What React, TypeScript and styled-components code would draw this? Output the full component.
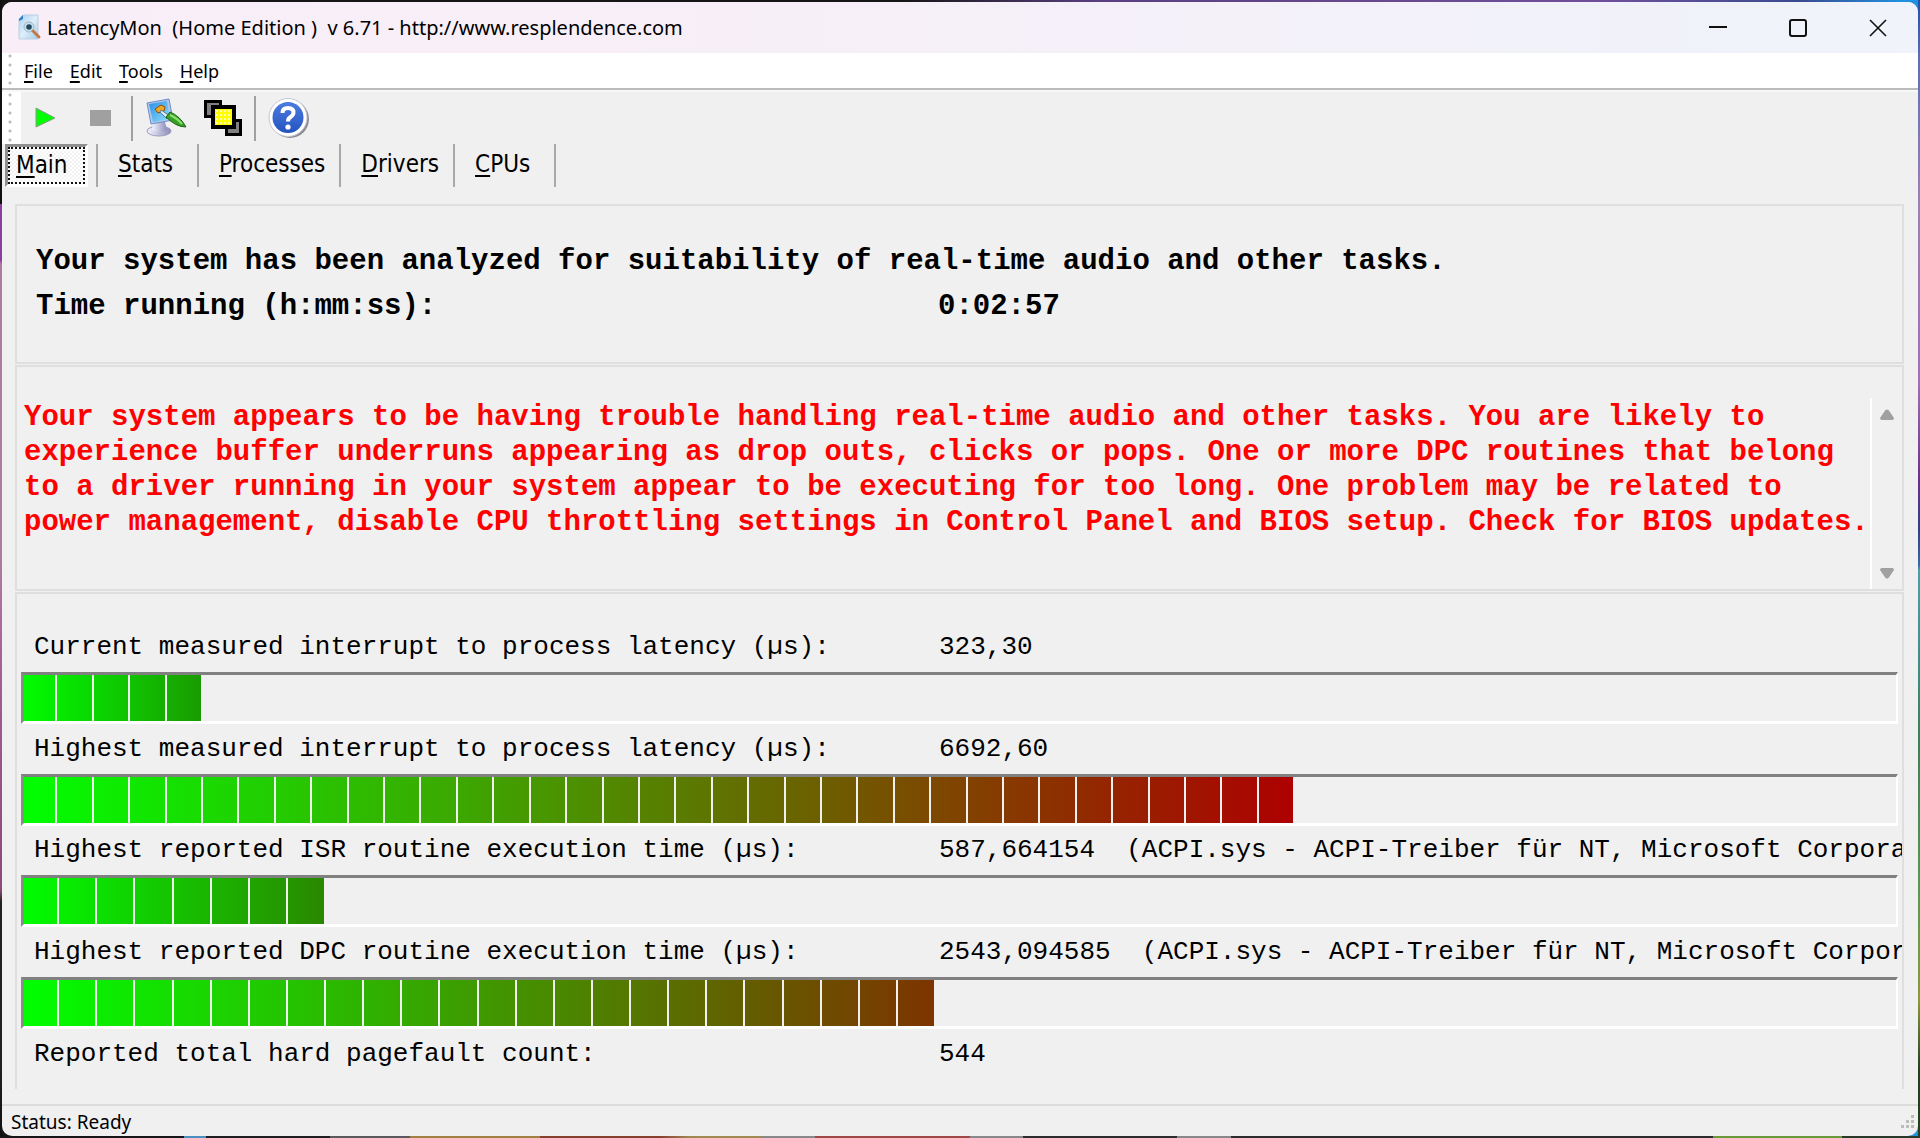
import React from "react";
import styled, { createGlobalStyle } from "styled-components";

const UI_FONT = `"Noto Sans", "Open Sans", sans-serif`;
const TAB_FONT = `"DejaVu Sans Condensed", "Noto Sans", sans-serif`;
const MONO_FONT = `"Liberation Mono", "Courier New", monospace`;

const GlobalStyle = createGlobalStyle`
  *, *::before, *::after { box-sizing: border-box; }
  html, body, #root { height: 100%; }
  body { margin: 0; color: #000; font-family: ${UI_FONT}; }
  button, textarea { font: inherit; color: inherit; border: 0; margin: 0; padding: 0; background: none; }
`;

const Desktop = styled.div`
  height: 100%;
  padding: 2px;
  background:
    linear-gradient(90deg, #16161a 0 184px, #4a90c0 184px 206px, #1e1e22 206px 330px, #5a5a5e 330px 410px, #a08040 410px 540px, #8a4030 540px 660px, #a08850 690px 761px, #888 761px 815px, #a04848 815px 970px, #888 970px 1023px, #2c2c30 1023px 1177px, #888 1177px 1231px, #2c2c30 1231px 1713px, #6a9a3a 1713px 1842px, #2c3828 1842px) bottom / 100% 2px no-repeat,
    linear-gradient(180deg, #101010 0 204px, #8a3fa0 204px 260px, #b07aa0 264px 560px, #a05a90 700px, #8a4a78 890px, #202020 902px 1070px, #101010) left / 2px 100% no-repeat,
    linear-gradient(180deg, #1a4fb0 0, #5a70b8 60px, #9a80b8 200px, #a070b8 380px, #6a2f90 480px, #30408a 530px, #306aa8 565px, #4aa0a8 570px, #3a9088 660px, #3a8058 740px, #5a9a50 900px, #8a9a3a 1000px, #204020 1070px) right / 2px 100% no-repeat,
    linear-gradient(90deg, #151515 0 900px, #5a4080 1100px, #70509a 1600px, #3a4a90 1800px, #2090e0 1900px);
`;

const Window = styled.main`
  height: 100%;
  display: flex;
  flex-direction: column;
  overflow: hidden;
  border-radius: 10px;
  background: #f0f0f0;
`;

const TitleBar = styled.header`
  height: 51px;
  flex: none;
  display: flex;
  align-items: center;
  padding-left: 15px;
  background: linear-gradient(90deg, #f9eef7 0, #f7eff8 40%, #f1f2f9 85%, #f0f3f9);
`;

const Title = styled.h1`
  flex: 1;
  margin: 0 0 0 5px;
  font-size: 20px;
  line-height: 28px;
  font-weight: 400;
  white-space: pre;
`;

const CaptionButton = styled.button`
  width: 80px;
  height: 100%;
  display: grid;
  place-items: center;
`;

const Gripper = styled.div`
  width: 19px;
  flex: none;
  align-self: stretch;
  background:
    radial-gradient(circle at 2px 2px, #bdbdbd 0 1px, transparent 2px) 6px 1px / 4px 9px repeat-y,
    #fff;
`;

const MenuBar = styled.nav`
  height: 37px;
  flex: none;
  display: flex;
  align-items: center;
  background: #fff;
  border-bottom: 2px solid #bcbcbc;
`;

const MenuButton = styled.button`
  font-size: 18px;
  line-height: 24px;
  padding: 0 8px 0 9px;
  &:first-of-type { padding-left: 3px; }
`;

const Key = styled.span`
  text-decoration: underline;
  text-decoration-thickness: 2px;
  text-underline-offset: 3px;
  text-decoration-skip-ink: none;
`;

const ToolBar = styled.div`
  height: 54px;
  flex: none;
  display: flex;
  align-items: center;
  border-top: 2px solid #f8f8fa;
`;

const ToolGroup = styled.div`
  display: flex;
  align-items: center;
  gap: 5px;
`;

const ToolButton = styled.button<{ $small?: boolean }>`
  width: ${(p) => (p.$small ? 50 : 52)}px;
  height: 46px;
  display: grid;
  place-items: center;
`;

const ToolRule = styled.span`
  width: 2px;
  height: 45px;
  margin-right: 2px;
  background: #a0a0a0;
`;

const TabStrip = styled.div`
  height: 43px;
  flex: none;
  display: flex;
  padding-left: 3px;
`;

const Tab = styled.button`
  min-width: 101px;
  font-family: ${TAB_FONT};
  font-size: 24px;
  line-height: 28px;
  padding: 0 14px 4px 20px;
  text-align: left;
  border-right: 2px solid #a8a8a8;
`;

const ActiveTab = styled(Tab)`
  min-width: 83px;
  margin-right: 8px;
  padding: 0;
  border: 3px solid;
  border-color: #909090 #fff #fff #909090;
  background: conic-gradient(#fff 25%, #f2f2f2 0 50%, #fff 0 75%, #f2f2f2 0) 0 0 / 4px 4px;
`;

const FocusRing = styled.span`
  display: block;
  height: 100%;
  padding: 2px 0 0 6px;
  border: 2px dotted #111;
`;

const TabRule = styled.span`
  width: 2px;
  background: #a8a8a8;
`;

const Content = styled.section`
  flex: 1;
  min-height: 0;
  display: flex;
  flex-direction: column;
  gap: 1px;
  padding: 17px 14px 15px 13px;
  font-family: ${MONO_FONT};
`;

const Panel = styled.section`
  border: 2px solid #dfdfdf;
`;

const SummaryPanel = styled(Panel)`
  height: 160px;
  padding: 33px 0 0 19px;
  font-size: 29px;
  line-height: 45px;
  font-weight: 700;
`;

const SummaryRow = styled.p`
  margin: 0;
  display: flex;
`;

const SummaryLabel = styled.span`
  width: 902px;
`;

const VerdictPanel = styled(Panel)`
  height: 226px;
  display: flex;
  padding-top: 31px;
`;

const Verdict = styled.textarea`
  flex: 1;
  padding: 2px 0 0 7px;
  resize: none;
  outline: none;
  overflow: hidden;
  font-size: 29px;
  line-height: 35px;
  font-weight: 700;
  color: #f00;
`;

const ScrollBar = styled.div`
  width: 32px;
  display: flex;
  flex-direction: column;
  justify-content: space-between;
  border-left: 2px solid #fff;
`;

const ScrollButton = styled.button`
  height: 32px;
  display: grid;
  place-items: center;
`;

const MetricsPanel = styled(Panel)`
  flex: 1;
  min-height: 0;
  display: flex;
  flex-direction: column;
  padding: 28px 0 10px 4px;
  border-bottom: 0;
  font-size: 26px;
`;

const MetricRow = styled.div`
  flex: 1;
  display: flex;
  align-items: center;
  padding: 0 0 0 13px;
  line-height: 30px;
  white-space: pre;
  overflow: hidden;
`;

const MetricLabel = styled.span`
  flex: none;
  width: 905px;
`;

const Track = styled.div`
  height: 52px;
  flex: none;
  margin-right: 4px;
  overflow: hidden;
  border: solid;
  border-width: 3px 2px 3px 3px;
  border-color: #808080 #fff #fff #8c8c8c;
`;

const Fill = styled.div`
  height: 100%;
  margin-left: -3px;
  display: flex;
  gap: 2px;
`;

const Segment = styled.span`
  flex: 1;
`;

const StatusBar = styled.footer`
  height: 32px;
  flex: none;
  display: flex;
  align-items: center;
  justify-content: space-between;
  padding: 2px 3px 0 9px;
  border-top: 2px solid #dcdcdc;
  font-size: 19px;
  line-height: 26px;
`;

function AppIcon() {
  return (
    <svg width="25" height="28" viewBox="0 0 25 28" aria-hidden="true">
      <defs>
        <linearGradient id="page" x1="0" y1="0" x2="1" y2="1">
          <stop offset="0" stopColor="#a9d0f0" />
          <stop offset=".5" stopColor="#dfeefa" />
          <stop offset="1" stopColor="#a5cbe8" />
        </linearGradient>
      </defs>
      <path d="M6 1H21V25H2V5Z" fill="url(#page)" stroke="#b9cfe2" />
      <path d="M6 1V5L2 7V5Z" fill="#2f7fc8" />
      <circle cx="12" cy="13" r="5" fill="#c5e2ee" stroke="#9fb5c4" />
      <circle cx="12" cy="13" r="2.8" fill="#26485c" />
      <path d="M16 17L22 23" stroke="#c07a48" strokeWidth="3" strokeLinecap="round" />
    </svg>
  );
}

function DisplayIcon() {
  return (
    <svg width="42" height="40" viewBox="0 0 42 40" aria-hidden="true">
      <defs>
        <linearGradient id="screen" x1="0" y1="0" x2="1" y2="1">
          <stop offset="0" stopColor="#2c8fe4" />
          <stop offset="1" stopColor="#8fe0fc" />
        </linearGradient>
        <linearGradient id="stand" x1="0" y1="0" x2="1" y2="0">
          <stop offset="0" stopColor="#f4f4ff" />
          <stop offset="1" stopColor="#8c8cb8" />
        </linearGradient>
      </defs>
      <ellipse cx="14" cy="33" rx="12" ry="5" fill="url(#stand)" stroke="#9a9ac0" />
      <path d="M8 24H20L22 32Q14 36 7 32Z" fill="url(#stand)" />
      <path d="M2 5L24 1L28 22L6 26Z" fill="#b4c8ec" stroke="#6a8cc8" />
      <path d="M4 6L22 3L25 21L8 24Z" fill="url(#screen)" />
      <path d="M10 11L16 7L20 9L19 13L13 15Z" fill="#f0a820" stroke="#8a4c10" />
      <path d="M16 12L25 18L22 21L15 14Z" fill="#dceaf4" stroke="#5a7a90" />
      <path d="M21 19L25 14Q35 18 41 29Q31 29 21 19Z" fill="#35a025" stroke="#1c6614" />
      <path d="M25 17Q32 20 37 26" stroke="#8be070" strokeWidth="2" fill="none" />
    </svg>
  );
}

function WindowsIcon() {
  return (
    <svg width="40" height="38" viewBox="0 0 40 38" aria-hidden="true">
      <rect x="2.5" y="2.5" width="15" height="15" fill="#808080" stroke="#000" strokeWidth="3" />
      <rect x="23.5" y="21.5" width="14" height="14" fill="#808080" stroke="#000" strokeWidth="3" />
      <rect x="10" y="8" width="21" height="20" fill="#ff0" stroke="#000" strokeWidth="4" />
      <g fill="#fffbb0">
        {[0, 1, 2, 3].map((r) =>
          [0, 1, 2, 3].map((c) => <rect key={`${r}${c}`} x={13 + c * 4} y={11 + r * 4} width="2" height="2" />)
        )}
      </g>
    </svg>
  );
}

function HelpIcon() {
  return (
    <svg width="42" height="42" viewBox="0 0 42 42" aria-hidden="true">
      <defs>
        <linearGradient id="ball" x1="0" y1="0" x2="0" y2="1">
          <stop offset="0" stopColor="#4c7ce0" />
          <stop offset="1" stopColor="#2454c0" />
        </linearGradient>
      </defs>
      <circle cx="22" cy="22" r="19" fill="#8c8c94" />
      <circle cx="20" cy="20.500" r="19" fill="#fff" stroke="#c4c8d4" />
      <circle cx="20" cy="20.500" r="15.500" fill="url(#ball)" />
      <path d="M14.500 16Q14.500 11 20 11Q25.500 11 25.500 15.500Q25.500 18 22.500 20Q20 21.500 20 24.500" fill="none" stroke="#fff" strokeWidth="4" />
      <circle cx="20" cy="30" r="2.600" fill="#fff" />
    </svg>
  );
}

function Hot({ children }: { children: string }) {
  return (
    <>
      <Key>{children[0]}</Key>
      {children.slice(1)}
    </>
  );
}

type Metric = { label: string; value: string; segments?: number; percent?: number; end?: [number, number] };

const metrics: Metric[] = [
  { label: "Current measured interrupt to process latency (µs):", value: "323,30", segments: 5, percent: 9.62, end: [26, 155] },
  { label: "Highest measured interrupt to process latency (µs):", value: "6692,60", segments: 35, percent: 67.95, end: [174, 0] },
  { label: "Highest reported ISR routine execution time (µs):", value: "587,664154  (ACPI.sys - ACPI-Treiber für NT, Microsoft Corpora", segments: 8, percent: 16.19, end: [42, 135] },
  { label: "Highest reported DPC routine execution time (µs):", value: "2543,094585  (ACPI.sys - ACPI-Treiber für NT, Microsoft Corpor", segments: 24, percent: 48.77, end: [125, 52] },
  { label: "Reported total hard pagefault count:", value: "544" },
];

function LevelBar({ metric }: { metric: Metric }) {
  const { segments = 0, percent = 0, end = [0, 255], label } = metric;
  const shade = (t: number) => `rgb(${Math.round(end[0] * t)}, ${Math.round(255 + (end[1] - 255) * t)}, 0)`;
  return (
    <Track role="meter" aria-label={label} aria-valuemin={0} aria-valuemax={100} aria-valuenow={percent}>
      <Fill style={{ width: `${percent}%` }}>
        {Array.from({ length: segments }, (_, i) => (
          <Segment
            key={i}
            style={{ background: `linear-gradient(90deg, ${shade(i / segments)}, ${shade((i + 1) / segments)})` }}
          />
        ))}
      </Fill>
    </Track>
  );
}

export default function App() {
  return (
    <>
      <GlobalStyle />
      <Desktop>
        <Window>
          <TitleBar>
            <AppIcon />
            <Title>{"LatencyMon  (Home Edition )  v 6.71 - http://www.resplendence.com"}</Title>
            <CaptionButton aria-label="Minimize">
              <svg width="18" height="18"><path d="M0 8H18" stroke="#111" strokeWidth="2" /></svg>
            </CaptionButton>
            <CaptionButton aria-label="Maximize">
              <svg width="18" height="18"><rect x="1" y="1" width="16" height="16" rx="2" fill="none" stroke="#111" strokeWidth="2" /></svg>
            </CaptionButton>
            <CaptionButton aria-label="Close">
              <svg width="18" height="18"><path d="M1 1L17 17M17 1L1 17" stroke="#111" strokeWidth="1.600" /></svg>
            </CaptionButton>
          </TitleBar>
          <MenuBar>
            <Gripper />
            {["File", "Edit", "Tools", "Help"].map((m) => (
              <MenuButton key={m}><Hot>{m}</Hot></MenuButton>
            ))}
          </MenuBar>
          <ToolBar>
            <Gripper />
            <ToolGroup>
              <ToolButton $small aria-label="Start">
                <svg width="22" height="22"><path d="M1 1L20 11L1 20Z" fill="#0f0" stroke="#8a9a8a" /></svg>
              </ToolButton>
              <ToolButton $small aria-label="Stop">
                <svg width="22" height="16"><rect width="21" height="16" fill="#a0a0a0" /></svg>
              </ToolButton>
              <ToolRule />
              <ToolButton aria-label="Options"><DisplayIcon /></ToolButton>
              <ToolButton aria-label="Windows"><WindowsIcon /></ToolButton>
              <ToolRule />
              <ToolButton aria-label="Help"><HelpIcon /></ToolButton>
            </ToolGroup>
          </ToolBar>
          <TabStrip role="tablist">
            <ActiveTab role="tab" aria-selected="true"><FocusRing><Hot>Main</Hot></FocusRing></ActiveTab>
            <TabRule />
            {["Stats", "Processes", "Drivers", "CPUs"].map((t) => (
              <Tab key={t} role="tab" aria-selected="false"><Hot>{t}</Hot></Tab>
            ))}
          </TabStrip>
          <Content>
            <SummaryPanel>
              <SummaryRow>Your system has been analyzed for suitability of real-time audio and other tasks.</SummaryRow>
              <SummaryRow>
                <SummaryLabel>Time running (h:mm:ss):</SummaryLabel>
                <span>0:02:57</span>
              </SummaryRow>
            </SummaryPanel>
            <VerdictPanel>
              <Verdict
                readOnly
                spellCheck={false}
                aria-label="Conclusion"
                value="Your system appears to be having trouble handling real-time audio and other tasks. You are likely to experience buffer underruns appearing as drop outs, clicks or pops. One or more DPC routines that belong to a driver running in your system appear to be executing for too long. One problem may be related to power management, disable CPU throttling settings in Control Panel and BIOS setup. Check for BIOS updates."
              />
              <ScrollBar>
                <ScrollButton aria-label="Scroll up">
                  <svg width="14" height="11"><path d="M5.500 1Q7 0 8.500 1L14 9Q14 11 12 11H2Q0 11 0 9Z" fill="#a0a0a0" /></svg>
                </ScrollButton>
                <ScrollButton aria-label="Scroll down">
                  <svg width="14" height="11"><path d="M5.500 10Q7 11 8.500 10L14 2Q14 0 12 0H2Q0 0 0 2Z" fill="#a0a0a0" /></svg>
                </ScrollButton>
              </ScrollBar>
            </VerdictPanel>
            <MetricsPanel>
              {metrics.map((m) => (
                <React.Fragment key={m.label}>
                  <MetricRow>
                    <MetricLabel>{m.label}</MetricLabel>
                    <span>{m.value}</span>
                  </MetricRow>
                  {m.segments && <LevelBar metric={m} />}
                </React.Fragment>
              ))}
            </MetricsPanel>
          </Content>
          <StatusBar>
            <span>Status: Ready</span>
            <svg width="15" height="15" aria-hidden="true">
              <path d="M11 0h3v3h-3zM6 5h3v3h-3zM11 5h3v3h-3zM1 10h3v3h-3zM6 10h3v3h-3zM11 10h3v3h-3z" fill="#bcbcbc" />
            </svg>
          </StatusBar>
        </Window>
      </Desktop>
    </>
  );
}
